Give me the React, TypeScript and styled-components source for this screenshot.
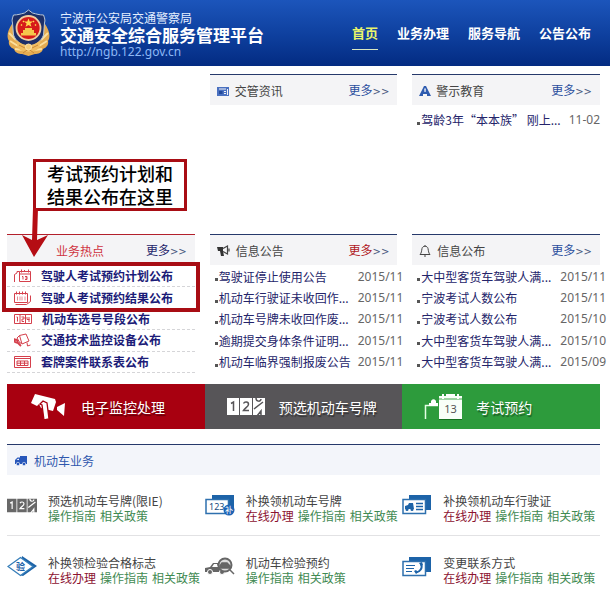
import React from 'react';
import styled, { createGlobalStyle } from 'styled-components';

const cjk = '"Noto Sans CJK SC", sans-serif';
const latin = '"Noto Sans", "Noto Sans CJK SC", sans-serif';

const GlobalStyle = createGlobalStyle`
  * { box-sizing: border-box; }
  body { margin: 0; background: #fff; overflow-x: hidden; font: 12px/16px ${cjk}; color: #444; }
  h1, h2, h3, p, ul { margin: 0; padding: 0; font-weight: normal; font-size: inherit; }
  ul { list-style: none; }
  a { color: inherit; text-decoration: none; }
  svg { display: block; flex: none; }
`;

const Header = styled.header`
  display: flex;
  align-items: center;
  justify-content: space-between;
  height: 66px;
  padding: 0 19px 0 7px;
  background: linear-gradient(#1c55bb, #0f41a0 50%, #032b82);
`;
const Brand = styled.a`
  display: flex;
  align-items: center;
  gap: 10px;
  color: #fff;
  white-space: nowrap;
`;
const BrandText = styled.div`
  display: flex;
  flex-direction: column;
  padding-top: 3px;
`;
const Bureau = styled.p`
  line-height: 16px;
  color: #e4efff;
`;
const SiteName = styled.h1`
  font-size: 17px;
  font-weight: bold;
  line-height: 18px;
`;
const SiteUrl = styled.p`
  font: 12px/16px ${latin};
  color: #8db8f5;
`;
const Nav = styled.nav`
  display: flex;
  gap: 19px;
  font-size: 13px;
  font-weight: bold;
  white-space: nowrap;
`;
const NavLink = styled.a<{ $active?: boolean }>`
  padding: 8px 0 7px;
  line-height: 18px;
  color: ${p => (p.$active ? '#e9f56a' : '#fff')};
  border-bottom: 1px solid ${p => (p.$active ? '#d9e8c0' : 'transparent')};
`;

const Main = styled.main`
  padding: 8px 10px 24px 7px;
`;
const Columns = styled.div`
  display: grid;
  grid-template-columns: repeat(3, minmax(0, 1fr));
  grid-template-rows: minmax(160px, auto) auto;
  column-gap: 15px;
`;
const Panel = styled.section<{ $column?: number }>`
  position: relative;
  grid-column: ${p => p.$column ?? 'auto'};
`;
const PanelHead = styled.div<{ $hot?: boolean }>`
  display: flex;
  align-items: center;
  height: 31px;
  padding: 2px 8px 0 7px;
  gap: 5px;
  background: #f4f4f6;
  border-top: 1px solid ${p => (p.$hot ? '#b3202c' : '#26396b')};
`;
const PanelTitle = styled.h2<{ $hot?: boolean }>`
  flex: 1;
  padding-left: ${p => (p.$hot ? '42px' : '0')};
  color: ${p => (p.$hot ? '#cf3340' : '#444')};
`;
const More = styled.a<{ $tone?: string }>`
  color: ${p => p.$tone ?? '#2b4f9e'};
`;
const Chevrons = styled.span`
  font: 10px/16px "DejaVu Sans", sans-serif;
  color: #4a5a80;
`;
const NewsList = styled.ul<{ $wide?: boolean }>`
  display: grid;
  grid-auto-rows: 1fr;
  height: ${p => (p.$wide ? '108px' : '29px')};
  padding-top: 1px;
  margin-right: ${p => (p.$wide ? '-6px' : '0')};
`;
const NewsItem = styled.li`
  display: flex;
  align-items: center;
  gap: 1px;
  padding-left: 5px;
  white-space: nowrap;
  &::before { content: ''; width: 3px; height: 3px; margin-top: 6px; background: #555; }
`;
const NewsLink = styled.a`
  flex: 1;
  color: #24246a;
`;
const NewsDate = styled.time`
  font: 12px/16px ${latin};
  color: #666;
`;
const HotList = styled.ul`
  display: grid;
  grid-auto-rows: 1fr;
  height: 108px;
  padding-top: 1px;
`;
const HotItem = styled.li`
  display: flex;
  align-items: center;
  gap: 10px;
  padding-left: 7px;
  color: #d5404c;
  border-bottom: 1px dashed #d5d5d8;
`;
const HotLink = styled.a`
  font-weight: bold;
  color: #1c1c78;
  white-space: nowrap;
`;
const Highlight = styled.div`
  position: absolute;
  left: -5px;
  right: -5px;
  top: 28px;
  height: 50px;
  border: 4px solid #a80d14;
  pointer-events: none;
`;
const Callout = styled.p`
  position: absolute;
  left: 26px;
  top: -75px;
  padding: 0 11px;
  background: #fff;
  border: 3px solid #a80d14;
  color: #000;
  font-size: 18px;
  line-height: 23px;
  font-weight: 500;
  white-space: nowrap;
`;
const Arrow = styled.svg`
  position: absolute;
  left: 14px;
  top: -26px;
`;

const Banners = styled.div`
  display: grid;
  grid-template-columns: repeat(3, 1fr);
  margin: 11px 0 15px;
`;
const Banner = styled.a<{ $tone: string }>`
  display: grid;
  grid-template-columns: 52px 1fr;
  align-items: center;
  height: 45px;
  padding-left: 22px;
  background: ${p => p.$tone};
  color: #fff;
  font-size: 14px;
  text-shadow: 1px 2px 1px #0006;
  svg { text-shadow: none; }
`;
const SectionHead = styled.div`
  display: flex;
  align-items: center;
  gap: 7px;
  height: 31px;
  padding: 2px 8px 0;
  background: #f3f5fa;
  border-top: 1px solid #26396b;
  color: #2f57ad;
`;
const Services = styled.ul`
  display: grid;
  grid-template-columns: repeat(3, minmax(0, 1fr));
`;
const Service = styled.li`
  display: grid;
  grid-template-columns: 41px 1fr;
  align-items: center;
  height: 61px;
  white-space: nowrap;
  &:nth-child(-n + 3) { border-bottom: 1px solid #e2e2e4; }
`;
const ServiceText = styled.div`
  line-height: 15px;
  padding-top: 6px;
`;
const ServiceLinks = styled.p`
  display: flex;
  gap: 4px;
`;
const ServiceLink = styled.a<{ $online?: boolean }>`
  color: ${p => (p.$online ? '#8c1230' : '#3f8a52')};
`;

const Emblem = () => (
  <svg width="43" height="48" viewBox="0 0 43 48" aria-hidden="true">
    <path d="M5 15C1 21-1 27 2 32c-1 4 2 7 5 8 1 4 5 5 8 5l6.500 2 6.500-2c3 0 7-1 8-5 3-1 6-4 5-8 3-5 1-11-3-17z" fill="#e5ac52" />
    <path d="M2 24l7 7M3 32l8 5M8 40l8 1M41 24l-7 7M40 32l-8 5M35 40l-8 1" stroke="#fbdf9d" strokeWidth="2" fill="none" />
    <path d="M21.500 1l4 3c4 1 7 2 11 2 1 3 2 5 1 8l-1 12c-2 6-8 10-15 13-7-3-13-7-15-13l-1-12c-1-3 0-5 1-8 4 0 7-1 11-2z" fill="#1c2f68" stroke="#b9c6d6" strokeWidth="1" />
    <circle cx="21.500" cy="19" r="12" fill="#d61a1a" stroke="#f0cda0" strokeWidth="1.800" />
    <path d="M21.500 9.500l1.200 3.100h3.300l-2.600 2 1 3.200-2.900-1.900-2.900 1.900 1-3.200-2.600-2h3.300z" fill="#ffd84f" />
    <path d="M14 24h2v-3h2v-2h7v2h2v3h2v2.500H14z" fill="#f5c64c" />
    <path d="M14 15.500l1 1M16 12l1 1M29 15.500l-1 1M27 12l-1 1" stroke="#ffd84f" strokeWidth="1.500" />
    <path d="M9 31c4 3 8 5 12.500 5S30 34 34 31l-2 8c-3 3-6 4-10.500 4S14 42 11 39z" fill="#efbd62" />
    <path d="M12 36l6 3M31 36l-6 3M16 44l5.500-4 5.500 4" stroke="#c98836" fill="none" />
    <circle cx="21.500" cy="38" r="3" fill="#f4cc78" stroke="#fbe3a8" />
  </svg>
);
const NewsIcon = () => (
  <svg width="13" height="11" viewBox="0 0 13 11"><path d="M0 1h12v9H0z" fill="#4a70c0" /><path d="M2 3h7M7 5.500h2M7 7.500h2M10.500 3v6" stroke="#f4f4f6" /><path d="M2 5h3.500v3H2z" fill="#234a9c" /></svg>
);
const WarnIcon = () => (
  <svg width="12" height="12" viewBox="0 0 12 12"><path d="M5 1h2l5 10H8V9H4v2H0z" fill="#2f5cb0" /><path d="M5.300 3.500h1.500L6.600 7H5.500z" fill="#fff" /></svg>
);
const HornIcon = () => (
  <svg width="14" height="12" viewBox="0 0 14 12"><path d="M0 2h6v4H1zM3 6h3l1 5H4z" fill="#333" /><path d="M6 3.500L10.500 1v8L6 6.500M12 3.500v3" fill="none" stroke="#444" strokeWidth="1.200" /></svg>
);
const BellIcon = () => (
  <svg width="13" height="14" viewBox="0 0 13 14" fill="none" stroke="#444"><path d="M1 10.500h10C9.500 9 9.500 7 9 4.500 8.500 1.500 3.500 1.500 3 4.500 2.500 7 2.500 9 1 10.500zM5 12h2M6 1v1" /></svg>
);
const TruckIcon = () => (
  <svg width="12" height="10" viewBox="0 0 12 10" fill="#2857ba"><path d="M5 0h7v8H5zM1 3l1.500-1.500H5V8H0V4z" /><path d="M1.500 4L3 2.700h1V4z" fill="#f3f5fa" /><circle cx="3" cy="8" r="1.700" stroke="#f3f5fa" strokeWidth=".6" /><circle cx="9" cy="8" r="1.700" stroke="#f3f5fa" strokeWidth=".6" /></svg>
);

const hotIcons = [
  <svg width="17" height="16" viewBox="0 0 17 16" fill="none" stroke="currentColor"><path d="M5.500 3.500h11v10h-11zM5.500 6h11M7.500 1.500v3M10.500 2v2M14.500 1.500v3M.5 14V6.500L3 5V3.500h2.500" /><path d="M8 8.500h1v3M11 8.500h2v3h-2M11.500 10H13" /></svg>,
  <svg width="17" height="16" viewBox="0 0 17 16" fill="none" stroke="currentColor"><path d="M.5 3.500h13v9H.5zM2.500 1.500v3M5.500 1.500v3M8.500 1.500v3M11.500 1.500v3M1.500 14.500h11l4-3v-6" /><path d="M3.500 6.500v4M6 6.500v4M8 6.500v4M11 6.500v4" opacity=".6" /></svg>,
  <svg width="18" height="12" viewBox="0 0 18 12" fill="none" stroke="currentColor"><path d="M.5 1.500h17v9H.5zM6 1.500v9M11.500 1.500v9M2.500 4h1v4.500M7.500 4H10v2H8v2.500h2M13 4v2.500h2.500M15 4v5" /></svg>,
  <svg width="17" height="16" viewBox="0 0 17 16" fill="none" stroke="currentColor"><path d="M5.500 3.500L12 2l3 7-7 3zM5.500 3.500L3 6l3 5h2M13 10.500l.5 3.500 3-1" /><path d="M0 7l3 1 1 3-3-1zM4 11l3 3" strokeWidth="1.800" /></svg>,
  <svg width="17" height="14" viewBox="0 0 17 14" fill="none" stroke="currentColor"><path d="M.5 1.500h16v11H.5zM.5 3.500h16M3 6h11v4.500H3zM3 8.200h11M6.500 6v4.500M10.500 6v4.500" /></svg>,
];

const Camera = () => (
  <svg width="38" height="30" viewBox="0 0 38 30"><path d="M6 2l20 5 1 3-3 9-12-3-2-4-2 2-6-3zM28 15l8-4-1 13-7-6z" fill="#fff" /><path d="M11 12l3-3 4 2 2 16-5 1-2-15z" fill="#fff" stroke="#a80010" strokeWidth="1.300" /></svg>
);
const Digits = ({ ink, bg, small }: { ink: string; bg: string; small?: boolean }) => (
  <svg width={small ? 30 : 38} height={small ? 15 : 19} viewBox="0 0 38 19">
    <path d="M0 1h12v17H0zM13 1h12v17H13zM26 1h12v17H26z" fill={bg} />
    <path d="M4 6.500L6.500 5v9M16.500 6.500c1-2 5-2 5 .8 0 2.500-3 3-5 6.200h5.500M29 1c0 4 5 4 5 1M27 12l9-7M30 19l4-5v5" fill="none" stroke={ink} strokeWidth="1.500" />
  </svg>
);
const Calendar = () => (
  <svg width="40" height="30" viewBox="0 0 40 30">
    <path d="M15 4h23v23H15z" fill="#f8fff8" /><path d="M15 27.500h23" stroke="#15701f" />
    <path d="M15 7h23" stroke="#45a54e" /><path d="M19 2v5M34 2v5M22 3h9" stroke="#fff" strokeWidth="2" />
    <path d="M1.500 27V13.500H14" stroke="#e4ffe4" strokeWidth="1.500" fill="none" /><path d="M5 14v-3h2c-1-5 6-5 5 0h2v3z" fill="#fff" />
    <text x="26.500" y="21" textAnchor="middle" fontFamily="Noto Sans" fontSize="11" fill="#555">13</text>
  </svg>
);
const Card = ({ children }: { children: React.ReactNode }) => (
  <svg width="30" height="22" viewBox="0 0 30 22"><path d="M7 1h22v15H7z" fill="#1d63a8" /><path d="M1 5.500h22.500v14H1z" fill="#fff" stroke="#2e70ae" strokeWidth="1.500" />{children}</svg>
);
const serviceIcons = [
  <Digits ink="#fff" bg="#686868" small />,
  <Card><text x="4" y="16" fontFamily="Noto Sans" fontSize="9" fill="#174b80">123</text><circle cx="24" cy="16" r="5.500" fill="#1d63b4" /><text x="24" y="19" textAnchor="middle" fontFamily="Noto Sans CJK SC" fontSize="8" fill="#fff">补</text></Card>,
  <Card><path d="M3 15v-3l3-1 1-2h4l1 6z" fill="#1d63a8" /><circle cx="5" cy="15.500" r="1.500" fill="#1d63a8" /><circle cx="10" cy="15.500" r="1.500" fill="#1d63a8" /><path d="M14 9.500h7M14 12.500h7M14 15.500h7" stroke="#1d63a8" strokeWidth="1.500" /></Card>,
  <svg width="30" height="21" viewBox="0 0 30 21"><path d="M15 0l15 10-14 10-3-1z" fill="#1d63a8" /><path d="M1 10.500L13.500 1.500 26 10.500l-12.500 9z" fill="#fff" stroke="#367eb9" strokeWidth="1.300" /><text x="13.500" y="14" textAnchor="middle" fontFamily="Noto Sans CJK SC" fontWeight="bold" fontSize="9" fill="#1d63a8">验</text></svg>,
  <svg width="30" height="20" viewBox="0 0 30 20"><path d="M0 15v-4l5-1 3-4h6l2 5h7v4z" fill="#666" /><path d="M7 10l2-3h3l1 3z" fill="#fff" /><circle cx="5" cy="15" r="2.500" fill="#666" stroke="#fff" /><circle cx="17" cy="15" r="2.500" fill="#666" stroke="#fff" /><circle cx="20" cy="8" r="6.500" fill="#ddd" stroke="#666" strokeWidth="2" /><path d="M15 9l2-3h5l3 3v2H16zM25 13l4 4" fill="#666" stroke="#666" strokeWidth="1.500" /></svg>,
  <Card><path d="M4 9.500h9M4 12.500h8M4 15.500h6" stroke="#1d63a8" strokeWidth="1.200" /><path d="M19 8c2 4-1 8-5 8.500" fill="none" stroke="#1d63a8" strokeWidth="2" /><path d="M17 7l3-1 1 3-2 1zM12 15l2-1 2 2-2 2z" fill="#1d63a8" /></Card>,
];

const hot = ['驾驶人考试预约计划公布', '驾驶人考试预约结果公布', '机动车选号号段公布', '交通技术监控设备公布', '套牌案件联系表公布'];
const notices = [
  ['驾驶证停止使用公告', '2015/11'],
  ['机动车行驶证未收回作...', '2015/11'],
  ['机动车号牌未收回作废...', '2015/11'],
  ['逾期提交身体条件证明...', '2015/11'],
  ['机动车临界强制报废公告', '2015/11'],
];
const releases = [
  ['大中型客货车驾驶人满...', '2015/11'],
  ['宁波考试人数公布', '2015/11'],
  ['宁波考试人数公布', '2015/10'],
  ['大中型客货车驾驶人满...', '2015/10'],
  ['大中型客货车驾驶人满...', '2015/09'],
];
const services = [
  { name: '预选机动车号牌(限IE)', online: false },
  { name: '补换领机动车号牌', online: true },
  { name: '补换领机动车行驶证', online: true },
  { name: '补换领检验合格标志', online: true },
  { name: '机动车检验预约', online: false },
  { name: '变更联系方式', online: true },
];

const MoreLink = ({ tone }: { tone?: string }) => (
  <More href="#more" $tone={tone}>更多<Chevrons>&gt;&gt;</Chevrons></More>
);
const News = ({ rows, wide }: { rows: string[][]; wide?: boolean }) => (
  <NewsList $wide={wide}>
    {rows.map(([title, date], i) => (
      <NewsItem key={i}><NewsLink href="#news">{title}</NewsLink><NewsDate>{date}</NewsDate></NewsItem>
    ))}
  </NewsList>
);

export default function App() {
  return (
    <>
      <GlobalStyle />
      <Header>
        <Brand href="#home">
          <Emblem />
          <BrandText>
            <Bureau>宁波市公安局交通警察局</Bureau>
            <SiteName>交通安全综合服务管理平台</SiteName>
            <SiteUrl>http://ngb.122.gov.cn</SiteUrl>
          </BrandText>
        </Brand>
        <Nav>
          <NavLink href="#home" $active>首页</NavLink>
          <NavLink href="#business">业务办理</NavLink>
          <NavLink href="#guide">服务导航</NavLink>
          <NavLink href="#notice">公告公布</NavLink>
        </Nav>
      </Header>
      <Main>
        <Columns>
          <Panel $column={2}>
            <PanelHead><NewsIcon /><PanelTitle>交管资讯</PanelTitle><MoreLink /></PanelHead>
          </Panel>
          <Panel $column={3}>
            <PanelHead><WarnIcon /><PanelTitle>警示教育</PanelTitle><MoreLink /></PanelHead>
            <News rows={[['驾龄3年“本本族” 刚上...', '11-02']]} />
          </Panel>
          <Panel>
            <PanelHead $hot><PanelTitle $hot>业务热点</PanelTitle><MoreLink tone="#24246a" /></PanelHead>
            <HotList>
              {hot.map((name, i) => (
                <HotItem key={name}>{hotIcons[i]}<HotLink href="#hot">{name}</HotLink></HotItem>
              ))}
            </HotList>
            <Highlight />
            <Callout>考试预约计划和<br />结果公布在这里</Callout>
            <Arrow width="28" height="50" viewBox="0 0 28 50" aria-hidden="true">
              <path d="M12 0h5l-1 32 11-5-14 22L1 27l10 5z" fill="#b50d14" />
            </Arrow>
          </Panel>
          <Panel>
            <PanelHead><HornIcon /><PanelTitle>信息公告</PanelTitle><MoreLink tone="#b01824" /></PanelHead>
            <News rows={notices} wide />
          </Panel>
          <Panel>
            <PanelHead><BellIcon /><PanelTitle>信息公布</PanelTitle><MoreLink /></PanelHead>
            <News rows={releases} wide />
          </Panel>
        </Columns>
        <Banners>
          <Banner href="#camera" $tone="#a80010"><Camera />电子监控处理</Banner>
          <Banner href="#plate" $tone="#575558"><Digits ink="#575558" bg="#fff" />预选机动车号牌</Banner>
          <Banner href="#exam" $tone="#2d9b3c"><Calendar />考试预约</Banner>
        </Banners>
        <section>
          <SectionHead><TruckIcon /><h2>机动车业务</h2></SectionHead>
          <Services>
            {services.map((s, i) => (
              <Service key={s.name}>
                {serviceIcons[i]}
                <ServiceText>
                  <h3>{s.name}</h3>
                  <ServiceLinks>
                    {s.online && <ServiceLink href="#online" $online>在线办理</ServiceLink>}
                    <ServiceLink href="#howto">操作指南</ServiceLink>
                    <ServiceLink href="#policy">相关政策</ServiceLink>
                  </ServiceLinks>
                </ServiceText>
              </Service>
            ))}
          </Services>
        </section>
      </Main>
    </>
  );
}
